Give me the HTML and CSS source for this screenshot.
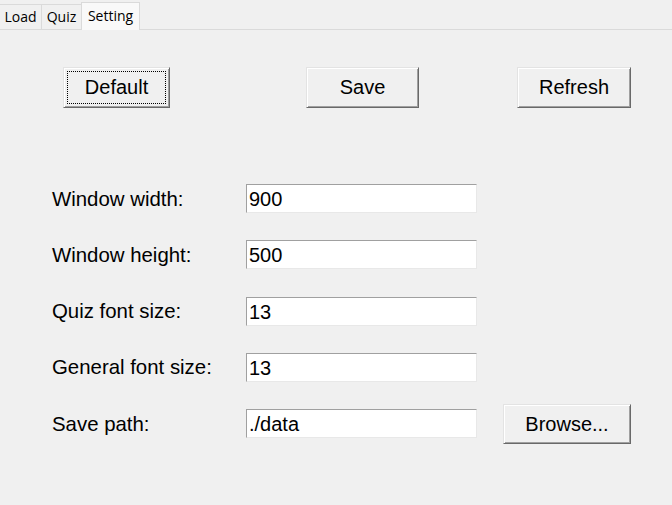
FILE: index.html
```html
<!DOCTYPE html>
<html>
<head>
<meta charset="utf-8">
<link rel="stylesheet" href="styles.css">
</head>
<body>
<div class="tabs">
  <div class="tab tab-load">Load</div>
  <div class="tab tab-quiz">Quiz</div>
  <div class="tab tab-setting active">Setting</div>
</div>
<div class="panel">
  <div class="actions">
    <button class="btn btn-default">Default</button>
    <button class="btn btn-save">Save</button>
    <button class="btn btn-refresh">Refresh</button>
  </div>
  <div class="form">
    <div class="label">Window width:</div>
    <div class="field">900</div>
    <div class="spacer"></div>

    <div class="label">Window height:</div>
    <div class="field">500</div>
    <div class="spacer"></div>

    <div class="label">Quiz font size:</div>
    <div class="field">13</div>
    <div class="spacer"></div>

    <div class="label">General font size:</div>
    <div class="field">13</div>
    <div class="spacer"></div>

    <div class="label">Save path:</div>
    <div class="field">./data</div>
    <button class="btn btn-browse">Browse...</button>
  </div>
</div>
</body>
</html>
```

FILE: styles.css
```css
html, body {
  margin: 0;
  padding: 0;
  background: #f0f0f0;
  width: 672px;
  height: 505px;
  overflow: hidden;
}

body {
  font-family: "Liberation Sans", Arial, sans-serif;
  color: #000;
}

.tabs {
  display: flex;
  align-items: flex-end;
  height: 29px;
  border-bottom: 1px solid #dadada;
  box-sizing: content-box;
}

.tab {
  box-sizing: border-box;
  height: 25px;
  border: 1px solid #dadada;
  border-bottom: none;
  border-right: none;
  background: #f0f0f0;
  font-family: "Open Sans", "Noto Sans", sans-serif;
  font-size: 14px;
  line-height: 24px;
  text-align: center;
  color: #000;
  white-space: nowrap;
}

.tab-load { width: 41px; border-left: none; }
.tab-quiz { width: 40px; }
.tab-setting { width: 59px; }

.tab.active {
  height: 28px;
  margin-bottom: -1px;
  background: #f9f9f9;
  border-right: 1px solid #dadada;
  line-height: 26px;
}

.panel {
  padding-top: 37px;
}

.actions {
  display: flex;
  padding-left: 63px;
  height: 41px;
}

.btn {
  box-sizing: border-box;
  height: 41px;
  padding: 0;
  margin: 0;
  background: #f0f0f0;
  border: 1px solid;
  border-color: #e3e3e3 #696969 #696969 #e3e3e3;
  box-shadow: inset 1px 1px 0 #ffffff, inset -1px -1px 0 #a0a0a0;
  font-family: "Liberation Sans", Arial, sans-serif;
  font-size: 20px;
  color: #000;
  text-align: center;
}

.btn-default {
  width: 107px;
  outline: 1px dotted #000;
  outline-offset: -5px;
}

.btn-save {
  width: 113px;
  margin-left: 136px;
}

.btn-refresh {
  width: 114px;
  margin-left: 98px;
}

.form {
  margin-top: 76px;
  padding-left: 52px;
  display: grid;
  grid-template-columns: 194px 231px 153px;
  grid-auto-rows: 29px;
  row-gap: 27.25px;
  align-items: center;
}

.label {
  font-size: 20.4px;
  line-height: 30px;
  white-space: nowrap;
}

.field {
  box-sizing: border-box;
  height: 29px;
  background: #ffffff;
  border: 1px solid;
  border-color: #a0a0a0 #e8e8e8 #e8e8e8 #a0a0a0;
  font-size: 20px;
  line-height: 28px;
  padding-left: 2px;
  white-space: nowrap;
}

.btn-browse {
  width: 128px;
  height: 40px;
  margin: -5px 0 -6px 26px;
  justify-self: start;
}
```
